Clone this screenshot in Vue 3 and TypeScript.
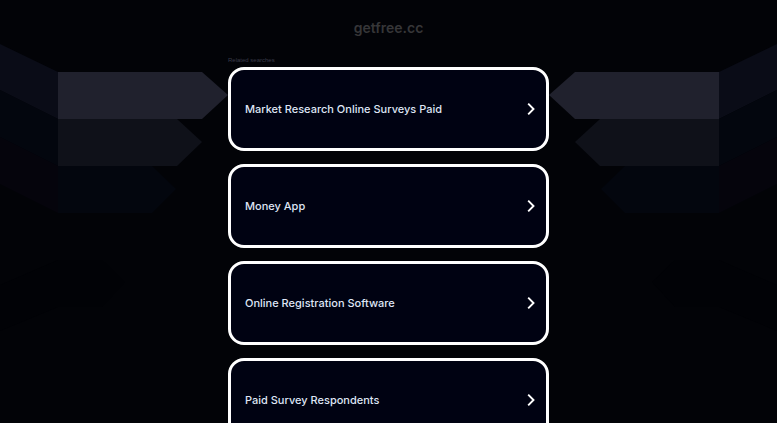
<script setup lang="ts">
interface Shape {
  points: string
  fill: string
}

const searches: string[] = [
  'Market Research Online Surveys Paid',
  'Money App',
  'Online Registration Software',
  'Paid Survey Respondents',
]

const ribbons: Shape[] = [
  { points: '0,44 58,72 58,119 0,90', fill: '#0a0c17' },
  { points: '0,90 58,119 58,166 0,137', fill: '#03060e' },
  { points: '0,137 58,166 58,213 0,184', fill: '#05040c' },
  { points: '58,72 202,72 228,95 202,119 58,119', fill: '#20212d' },
  { points: '58,119 177,119 202,142 177,166 58,166', fill: '#0f1119' },
  { points: '58,166 152,166 176,189 152,213 58,213', fill: '#03060e' },
  { points: '0,285 58,260 102,260 125,282 102,307 58,307 0,331', fill: '#010206' },
]
</script>

<template>
  <div class="page">
    <svg class="backdrop" viewBox="0 0 777 423" preserveAspectRatio="xMidYMin slice" aria-hidden="true">
      <g>
        <polygon v-for="r in ribbons" :key="r.points" :points="r.points" :fill="r.fill" />
      </g>
      <g transform="translate(777 0) scale(-1 1)">
        <polygon v-for="r in ribbons" :key="r.points" :points="r.points" :fill="r.fill" />
      </g>
    </svg>
    <header class="header">
      <h1 class="domain">getfree.cc</h1>
    </header>
    <main class="content">
      <h2 class="label">Related searches</h2>
      <nav class="list" aria-label="Related searches">
        <a v-for="item in searches" :key="item" class="card" href="#">
          <span>{{ item }}</span>
          <svg class="chevron" viewBox="0 0 8 12" aria-hidden="true">
            <path d="M1.2 0.7 6.5 6 1.2 11.3" fill="none" stroke="#fff" stroke-width="1.9" />
          </svg>
        </a>
      </nav>
    </main>
  </div>
</template>

<style>
body {
  margin: 0;
  background: #020307;
}
</style>

<style scoped>
.page {
  position: relative;
  min-height: 100vh;
  font-family: Inter, "Liberation Sans", Arial, sans-serif;
}
.backdrop {
  position: absolute;
  top: 0;
  left: 0;
  width: 100%;
}
.header {
  position: relative;
  padding: 20px 0;
  text-align: center;
}
.domain {
  margin: 0;
  font-size: 14px;
  font-weight: 600;
  line-height: 16px;
  color: #363638;
}
.content {
  position: relative;
  max-width: 321px;
  margin: 0 auto;
}
.label {
  margin: 0;
  padding-bottom: 3px;
  font-family: "Liberation Sans", Arial, sans-serif;
  font-size: 6px;
  font-weight: 400;
  line-height: 8px;
  color: #3a3b4a;
}
.list {
  display: flex;
  flex-direction: column;
  gap: 13px;
}
.card {
  display: flex;
  align-items: center;
  justify-content: space-between;
  box-sizing: border-box;
  min-height: 84px;
  padding: 0 11px 0 14px;
  border: 3px solid #fff;
  border-radius: 16px;
  background: #000212;
  color: #dfe5f5;
  font-size: 11px;
  font-weight: 500;
  line-height: 16px;
  text-decoration: none;
}
.chevron {
  width: 8px;
  height: 12px;
}
</style>
